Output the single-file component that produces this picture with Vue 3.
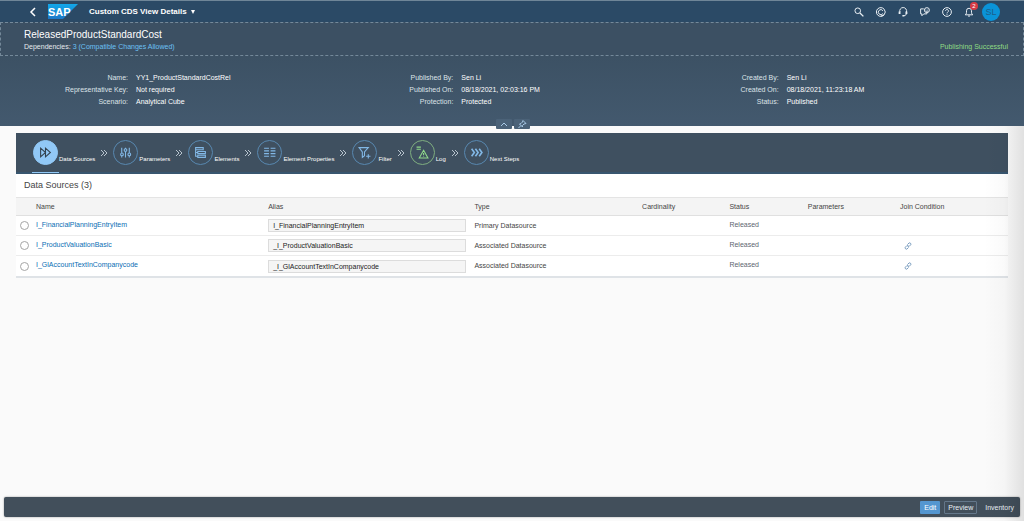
<script setup>
import { ref } from 'vue'

const details = [
  [
    ['Name:', 'YY1_ProductStandardCostRel'],
    ['Representative Key:', 'Not required'],
    ['Scenario:', 'Analytical Cube'],
  ],
  [
    ['Published By:', 'Sen Li'],
    ['Published On:', '08/18/2021, 02:03:16 PM'],
    ['Protection:', 'Protected'],
  ],
  [
    ['Created By:', 'Sen Li'],
    ['Created On:', '08/18/2021, 11:23:18 AM'],
    ['Status:', 'Published'],
  ],
]

const steps = [
  { label: 'Data Sources', kind: 'active', icon: 'M3 4v16l9-8zM12 4v16l9-8z' },
  { label: 'Parameters', kind: '', icon: 'M5 3v10M5 18v3M12 3v2M12 10v11M19 3v10M19 18v3M3 15.500a2.500 2.500 0 1 0 5 0a2.500 2.500 0 1 0-5 0M9.500 7.500a2.500 2.500 0 1 0 5 0a2.500 2.500 0 1 0-5 0M16.500 15.500a2.500 2.500 0 1 0 5 0a2.500 2.500 0 1 0-5 0' },
  { label: 'Elements', kind: '', icon: 'M3 3h14v4H3zM7 10h14v4H7zM7 17h14v4H7zM3 7v12h4M3 12h4' },
  { label: 'Element Properties', kind: '', icon: 'M2 4h9M2 9h9M2 14h9M2 19h9M14 4h9M14 9h9M14 14h9M14 19h9' },
  { label: 'Filter', kind: '', icon: 'M2 3h17l-7 8v7l-4 3V11zM19 15v8M15 19h8' },
  { label: 'Log', kind: 'good', icon: 'M1 2h8M1 6h8M14 8l8 14H6zM14 13v4M14 19v1' },
  { label: 'Next Steps', kind: 'bold', icon: 'M3 5l5 7-5 7M10 5l5 7-5 7M17 5l5 7-5 7' },
]

const sources = ref([
  { name: 'I_FinancialPlanningEntryItem', alias: 'I_FinancialPlanningEntryItem', type: 'Primary Datasource', join: false },
  { name: 'I_ProductValuationBasic', alias: '_I_ProductValuationBasic', type: 'Associated Datasource', join: true },
  { name: 'I_GlAccountTextInCompanycode', alias: '_I_GlAccountTextInCompanycode', type: 'Associated Datasource', join: true },
])
const selected = ref('')
</script>

<template>
  <div class="page">
    <header class="shell">
      <button class="icon-btn back" aria-label="Back">
        <svg viewBox="0 0 10 10"><path d="M7 1L3 5l4 4" stroke-width="1.500" /></svg>
      </button>
      <svg class="logo" viewBox="0 0 30 15" role="img" aria-label="SAP">
        <defs>
          <linearGradient id="sap" x1="0" y1="0" x2="0" y2="1">
            <stop offset="0" stop-color="#12a8ea" />
            <stop offset="1" stop-color="#1b78c8" />
          </linearGradient>
        </defs>
        <path d="M0 0h30L15 15H0z" fill="url(#sap)" />
        <text x="0" y="12" fill="#fff" font-size="11" font-weight="700">SAP</text>
      </svg>
      <button class="app-title">Custom CDS View Details <span class="caret"></span></button>
      <nav class="tools">
        <button class="icon-btn" aria-label="Search">
          <svg viewBox="0 0 16 16"><circle cx="6" cy="6" r="4.500" /><path d="M9.500 9.500L15 15" stroke-width="2.200" /></svg>
        </button>
        <button class="icon-btn" aria-label="Copilot">
          <svg viewBox="0 0 16 16"><path d="M13 3.500A7 7 0 1 0 13 12.500M13 3.500a7 7 0 0 1 0 9M11 6A4 4 0 1 0 11 10.500M8 14.500l5-2" /></svg>
        </button>
        <button class="icon-btn" aria-label="Support">
          <svg viewBox="0 0 16 16"><path d="M3 8a5.500 5.500 0 1 1 10.500 0v2c0 2-1.500 4-4 4" /><path d="M2.500 7v4M13.500 7v4" stroke-width="3" /><path d="M7 14h3" stroke-width="2.400" /></svg>
        </button>
        <button class="icon-btn" aria-label="Feedback">
          <svg viewBox="0 0 16 16"><path d="M6 3H1v8h2v3l3-3h5V9" /><circle cx="11" cy="5" r="4" /><path d="M9 6q2 2 4 0M9.500 4v.500M12.500 4v.500" /></svg>
        </button>
        <button class="icon-btn" aria-label="Help">
          <svg viewBox="0 0 16 16"><circle cx="8" cy="8" r="7" /><path d="M5.700 6.200a2.300 2.300 0 1 1 3.500 2q-1.200.800-1.200 2M8 11.500v1.200" /></svg>
        </button>
        <button class="icon-btn bell" aria-label="Notifications">
          <svg viewBox="0 0 16 16"><path d="M2 12.500q2-1 2-4V6a4 4 0 0 1 8 0v2.500q0 3 2 4zM6.500 14.500h3" /></svg>
          <span class="badge">2</span>
        </button>
        <button class="avatar">SL</button>
      </nav>
    </header>

    <section class="object-title">
      <div>
        <h1>ReleasedProductStandardCost</h1>
        <p>Dependencies: <a href="#deps">3 (Compatible Changes Allowed)</a></p>
      </div>
      <p class="success">Publishing Successful</p>
    </section>

    <section class="details">
      <dl v-for="(group, i) in details" :key="i">
        <div v-for="[k, v] in group" :key="k">
          <dt>{{ k }}</dt>
          <dd>{{ v }}</dd>
        </div>
      </dl>
      <div class="handles">
        <button aria-label="Collapse header">
          <svg viewBox="0 0 16 10"><path d="M5 7l3-3 3 3" /></svg>
        </button>
        <button aria-label="Pin header">
          <svg viewBox="0 0 16 10"><path d="M9 1.500l3 3-2 .500-1.500 1.500v1.500L5.500 5 7 4.500 8.500 3zM7 6.500L4.500 9" /></svg>
        </button>
      </div>
    </section>

    <main>
      <nav class="steps">
        <template v-for="(s, i) in steps" :key="s.label">
          <svg v-if="i" class="arrow" viewBox="0 0 8 8"><path d="M1 1l3 3-3 3M4 1l3 3-3 3" /></svg>
          <button class="step" :class="s.kind">
            <span class="circle"><svg viewBox="0 0 24 24"><path :d="s.icon" /></svg></span>
            <span class="label">{{ s.label }}</span>
          </button>
        </template>
      </nav>

      <h2>Data Sources (3)</h2>
      <table>
        <colgroup>
          <col class="c-pick" /><col class="c-name" /><col class="c-alias" /><col class="c-type" />
          <col class="c-card" /><col class="c-status" /><col class="c-param" /><col />
        </colgroup>
        <thead>
          <tr>
            <th></th><th>Name</th><th>Alias</th><th>Type</th><th>Cardinality</th>
            <th>Status</th><th>Parameters</th><th>Join Condition</th>
          </tr>
        </thead>
        <tbody>
          <tr v-for="s in sources" :key="s.name">
            <td class="pick"><input v-model="selected" type="radio" name="source" :value="s.name" :aria-label="s.name" /></td>
            <td class="upper"><a href="#source">{{ s.name }}</a></td>
            <td><textarea v-model="s.alias" class="alias" rows="1" :aria-label="'Alias of ' + s.name"></textarea></td>
            <td>{{ s.type }}</td>
            <td></td>
            <td class="upper status">Released</td>
            <td></td>
            <td>
              <button v-if="s.join" class="link" aria-label="Join condition">
                <svg viewBox="0 0 16 16"><path d="M7 5l3-3q1.500-1 3 .500t.500 3L10 9Q8.500 10 7 8.500M9 11l-3 3q-1.500 1-3-.500t-.500-3L6 7q1.500-1 3 .500" /></svg>
              </button>
            </td>
          </tr>
        </tbody>
      </table>
    </main>

    <footer>
      <button class="primary">Edit</button>
      <button class="outlined">Preview</button>
      <button>Inventory</button>
    </footer>
  </div>
</template>

<style>
body {
  margin: 0;
}
</style>

<style scoped>
.page {
  position: relative;
  display: flex;
  flex-direction: column;
  box-sizing: border-box;
  min-height: 100vh;
  background: #fafafa;
  color: #444;
  font: 7px/12px "Liberation Sans", Arial, sans-serif;
}
.page::after {
  content: "";
  position: absolute;
  top: 126px;
  right: 0;
  bottom: 0;
  width: 40px;
  background: linear-gradient(90deg, transparent, rgba(0, 0, 0, 0.02) 50%, rgba(0, 0, 0, 0.1));
  pointer-events: none;
}
button {
  padding: 0;
  border: 0;
  background: none;
  color: inherit;
  font: inherit;
}
svg {
  display: block;
  fill: none;
  stroke: currentColor;
}
h1, h2, p, dl, dd {
  margin: 0;
  font-weight: 400;
}
a {
  color: #0a6eb4;
  text-decoration: none;
}

.shell {
  display: flex;
  align-items: center;
  box-sizing: border-box;
  height: 22px;
  padding: 0 24px 0 28px;
  border-top: 1px solid #6f8698;
  background: #2b4a66;
  color: #fff;
}
.icon-btn {
  width: 10px;
  height: 10px;
}
.icon-btn svg {
  width: 10px;
  height: 10px;
  stroke-width: 1.600;
}
.logo {
  width: 30px;
  height: 15px;
  margin-left: 10px;
  stroke: none;
}
.app-title {
  display: flex;
  align-items: center;
  gap: 4px;
  margin-left: 11px;
  font-size: 8px;
  font-weight: 700;
}
.caret {
  border: 2px solid transparent;
  border-top: 4px solid #fff;
  border-bottom: 0;
}
.tools {
  display: flex;
  align-items: center;
  gap: 12px;
  margin-left: auto;
  color: #e8eef3;
}
.bell {
  position: relative;
}
.badge {
  position: absolute;
  top: -5px;
  right: -4px;
  width: 8px;
  height: 8px;
  border-radius: 4px;
  background: #d63b45;
  color: #fff;
  font-size: 6px;
  line-height: 8px;
}
.avatar {
  width: 18px;
  height: 18px;
  margin-left: -4px;
  border-radius: 50%;
  background: #0a93d8;
  color: #1d5f8c;
  font-size: 9px;
}

.object-title {
  display: flex;
  justify-content: space-between;
  align-items: flex-end;
  box-sizing: border-box;
  height: 34px;
  padding: 0 15px 2px 23px;
  border: 1px dashed #74899a;
  background: #3c5063;
  color: #e4e9ed;
}
h1 {
  font-size: 10px;
  line-height: 13px;
  color: #fff;
}
.object-title a {
  color: #6cc0f5;
}
.success {
  color: #8fdc84;
}

.details {
  position: relative;
  display: grid;
  grid-template-columns: repeat(3, 1fr);
  box-sizing: border-box;
  height: 70px;
  padding: 16px 24px 0;
  background: linear-gradient(#3c5164, #43596e);
  color: #dde3e8;
}
.details dl > div {
  display: grid;
  grid-template-columns: 104px 1fr;
  gap: 8px;
}
dt {
  text-align: right;
}
dd {
  color: #fff;
}
.handles {
  position: absolute;
  left: 2px;
  right: 0;
  bottom: -3px;
  display: flex;
  justify-content: center;
  gap: 2px;
}
.handles button {
  width: 16px;
  height: 10px;
  border-radius: 1px;
  background: #4b6278;
  color: #a9c9e6;
}

main {
  flex: 1;
  padding: 7px 16px 0;
}
.steps {
  display: flex;
  align-items: center;
  box-sizing: border-box;
  height: 41px;
  padding: 0 17px;
  border-bottom: 2px solid #38566f;
  background: #3f5060;
  color: #82b8e6;
}
.step {
  position: relative;
  display: flex;
  align-items: flex-end;
  gap: 1px;
}
.circle {
  display: grid;
  place-items: center;
  box-sizing: border-box;
  width: 25px;
  height: 25px;
  border: 1px solid #5888b0;
  border-radius: 50%;
}
.circle svg {
  width: 13px;
  height: 13px;
  stroke-width: 2;
}
.bold svg {
  stroke-width: 3;
}
.label {
  color: #fff;
  font-size: 6px;
  line-height: 12px;
}
.active .circle {
  border-color: #91c8f6;
  background: #91c8f6;
  color: #33424f;
}
.active::after {
  content: "";
  position: absolute;
  left: -1px;
  bottom: -8px;
  width: 27px;
  height: 1px;
  background: #91c8f6;
}
.good .circle {
  border-color: #7fae80;
  color: #8fd88a;
}
.arrow {
  width: 8px;
  height: 8px;
  margin: 0 5px;
  color: #b8c4ce;
}

h2 {
  padding: 0 8px;
  background: #fff;
  font-size: 9px;
  line-height: 23px;
}
table {
  width: 100%;
  border-collapse: separate;
  border-spacing: 0;
  border-bottom: 2px solid #dfe3e7;
  table-layout: fixed;
  background: #fff;
}
.c-pick { width: 16px; }
.c-name { width: 23.400%; }
.c-alias { width: 20.800%; }
.c-type { width: 16.900%; }
.c-card { width: 8.800%; }
.c-status { width: 7.900%; }
.c-param { width: 9.300%; }
th, td {
  box-sizing: border-box;
  height: 20px;
  padding: 0 4px;
  border-bottom: 1px solid #ececec;
  font-weight: 400;
  text-align: left;
  vertical-align: middle;
}
th {
  height: 19px;
  border-top: 1px solid #e4e4e4;
  border-bottom-color: #e0e0e0;
  background: #f4f4f4;
}
tbody tr:last-child td {
  border-bottom: 0;
}
.upper {
  padding-bottom: 2px;
}
.status {
  color: #5d6570;
}
.pick input {
  display: block;
  box-sizing: border-box;
  width: 9px;
  height: 9px;
  margin: 0;
  border: 1px solid #a5a5a5;
  border-radius: 50%;
  background: #fff;
  appearance: none;
}
.pick input:checked {
  border: 3px solid #0a6eb4;
}
.alias {
  display: block;
  box-sizing: border-box;
  width: 100%;
  height: 13px;
  margin: 0;
  padding: 0 4px;
  overflow: hidden;
  border: 1px solid #dcdcdc;
  background: #f5f5f5;
  color: #222;
  font: inherit;
  line-height: 11px;
  white-space: nowrap;
  resize: none;
}
.link {
  display: block;
  margin-left: 4px;
  color: #5b86b0;
}
.link svg {
  width: 8px;
  height: 8px;
  stroke-width: 1.600;
}

footer {
  display: flex;
  justify-content: flex-end;
  align-items: center;
  gap: 4px;
  height: 20px;
  margin: 0 4px 4px;
  padding-right: 2px;
  border-radius: 2px;
  background: #424f5b;
  box-shadow: 0 0 2px rgba(0, 0, 0, 0.4);
  color: #e8eef3;
}
footer button {
  box-sizing: border-box;
  height: 13px;
  padding: 0 3px;
  border: 1px solid transparent;
  border-radius: 1px;
  line-height: 11px;
}
.primary {
  background: #5496d0;
  color: #fff;
}
.outlined {
  border-color: #64778a;
}
</style>
